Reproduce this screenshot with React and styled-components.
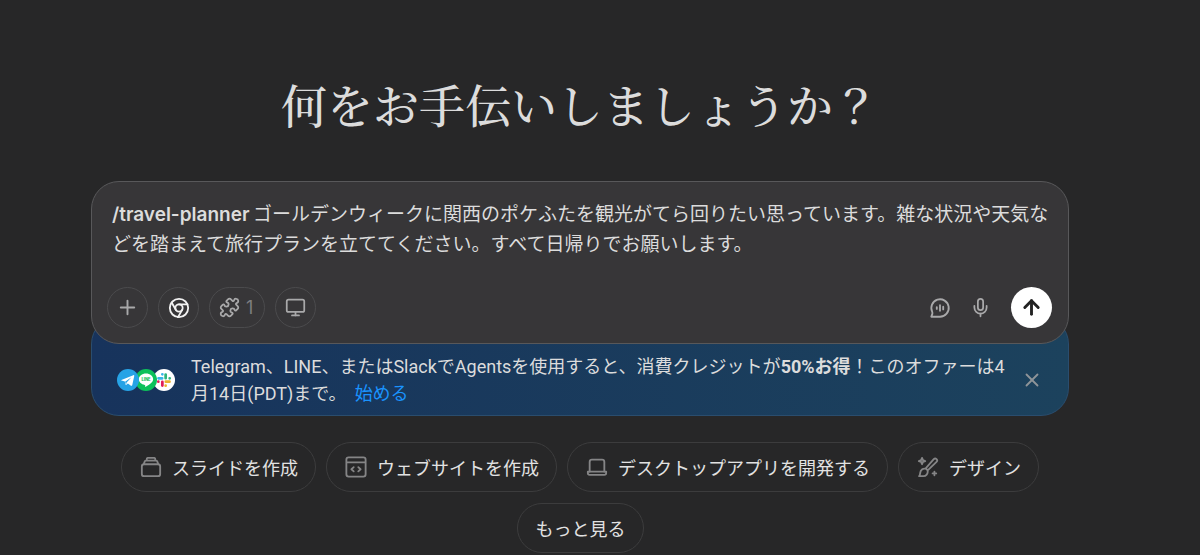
import React, { useState } from 'react';
import styled, { createGlobalStyle } from 'styled-components';
import { ArrowUp, Mic, Monitor, Plus, Puzzle, X } from 'lucide-react';

const GlobalStyle = createGlobalStyle`
  * {
    box-sizing: border-box;
  }
  body {
    margin: 0;
    background-color: #272728;
    color: #dcdcdc;
    font-family: Inter, "Noto Sans CJK JP", sans-serif;
  }
  button, textarea {
    font-family: inherit;
  }
`

const Page = styled.main`
  display: flex;
  flex-direction: column;
  align-items: center;
  padding: 73px 40px 0 0;
`

const Heading = styled.h1`
  margin: 0 0 48px;
  font-family: "Noto Serif CJK JP", "Noto Serif JP", "Noto Sans CJK JP", serif;
  font-size: 46px;
  font-weight: 500;
  line-height: 60px;
`

const Panel = styled.div`
  width: 100%;
  max-width: 978px;
`

const Composer = styled.form`
  position: relative;
  z-index: 1;
  padding: 18px 16px 15px 15px;
  border: 1px solid #58585a;
  border-radius: 28px;
  background-color: #373638;
`

const Prompt = styled.div`
  display: grid;
  margin: 0 0 27px;
  padding: 0 0 0 5px;
  font-size: 19px;
  line-height: 30px;
`

const Command = styled.label`
  grid-area: 1 / 1;
  justify-self: start;
  align-self: start;
  font-weight: 600;
`

const PromptInput = styled.textarea`
  grid-area: 1 / 1;
  width: 100%;
  margin: 0;
  padding: 0;
  border: none;
  outline: none;
  resize: none;
  overflow: hidden;
  background: transparent;
  color: inherit;
  font-size: inherit;
  line-height: inherit;
  text-indent: 141px;
`

const Toolbar = styled.div`
  display: flex;
  align-items: center;
  gap: 10px;
`

const Spacer = styled.div`
  flex: 1;
`

const ToolButton = styled.button`
  display: flex;
  align-items: center;
  justify-content: center;
  gap: 6px;
  min-width: 41px;
  height: 41px;
  padding: 0 ${({ $wide }) => ($wide ? "11px 0 9px" : "0")};
  border: 1px solid #4b4b4d;
  border-radius: 21px;
  background: transparent;
  color: ${({ $active }) => ($active ? "#f2f2f2" : "#a9a9aa")};
  font-size: 18px;
`

const Count = styled.span`
  color: #7d7d7f;
`

const GhostButton = styled.button`
  display: flex;
  align-items: center;
  justify-content: center;
  width: ${({ $size }) => $size}px;
  height: ${({ $size }) => $size}px;
  padding: 0;
  border: none;
  background: transparent;
  color: #a9a9aa;
`

const SendButton = styled(GhostButton)`
  margin-left: 5px;
  border-radius: 50%;
  background-color: #fff;
  color: #222;
`

const CloseButton = styled(GhostButton)`
  color: #8f9499;
`

const Banner = styled.section`
  display: flex;
  align-items: center;
  margin-top: -28px;
  padding: 36px 24px 8px 25px;
  border: 1px solid #2a4d6e;
  border-radius: 28px;
  background: linear-gradient(90deg, #17335c, #1c425d);
`

const Logos = styled.div`
  display: flex;
  flex-shrink: 0;
  margin-right: 16px;
`

const Logo = styled.svg`
  position: relative;
  z-index: ${({ $level }) => $level};
  width: 22px;
  height: 22px;
  margin-right: -4px;
  &:last-child {
    margin-right: 0;
  }
`

const BannerText = styled.p`
  flex: 1;
  margin: 0 14px 0 0;
  font-family: Roboto, "Noto Sans CJK JP", sans-serif;
  font-size: 18px;
  line-height: 27px;
`

const StartLink = styled.a`
  margin-left: 8px;
  color: #1a93fe;
  text-decoration: none;
`

const Chips = styled.div`
  display: flex;
  flex-wrap: wrap;
  justify-content: center;
  gap: 11px 10px;
  margin-top: 26px;
`

const Chip = styled.button`
  display: flex;
  align-items: center;
  gap: 10px;
  height: 50px;
  padding: 0 17px 1px 18px;
  border: 1px solid #3c3c3d;
  border-radius: 25px;
  background: transparent;
  color: #e2e2e2;
  font-size: 18px;
`

const ChipIcon = styled.svg`
  width: 22px;
  height: 22px;
  fill: none;
  stroke: #858586;
  stroke-width: 2;
  stroke-linecap: round;
  stroke-linejoin: round;
`

const LineIcon = styled(ChipIcon)`
  stroke: currentColor;
`

const chips = [
  {
    label: "スライドを作成",
    icon: (
      <>
        <rect x="2" y="9" width="20" height="13" rx="2.5" />
        <path d="M4 9l1.2-3.2A1.5 1.5 0 0 1 6.6 5h10.8a1.5 1.5 0 0 1 1.4.8L20 9M7 5l.6-2.2A1 1 0 0 1 8.6 2h6.8a1 1 0 0 1 1 .8L17 5" />
      </>
    ),
  },
  {
    label: "ウェブサイトを作成",
    icon: (
      <>
        <rect x="1.5" y="1.5" width="21" height="21" rx="2.5" />
        <path d="M2 7h20M9.5 12.2L7 14.5l2.5 2.3M14.5 12.2l2.5 2.3-2.5 2.3" />
      </>
    ),
  },
  {
    label: "デスクトップアプリを開発する",
    icon: (
      <>
        <path d="M4 17V6.5A2.5 2.5 0 0 1 6.5 4h11A2.5 2.5 0 0 1 20 6.5V17" />
        <path d="M2 17h20v1.5a2 2 0 0 1-2 2H4a2 2 0 0 1-2-2z" />
      </>
    ),
  },
  {
    label: "デザイン",
    icon: (
      <>
        <path d="M9.5 13.5l8.8-10a2.1 2.1 0 0 1 3 3l-9.6 9.2zM9.3 13.8a4 4 0 0 1 2.3 2.3c.6 3.2-1.8 5.9-4.6 5.9H2.3c1-.9 1-2.1 1.2-3.7.3-2.9 2.8-5 5.8-4.5z" />
        <path d="M5.5 2l1 2.5L9 5.5l-2.5 1-1 2.5-1-2.5L2 5.5l2.5-1zM19 17v4M17 19h4" />
      </>
    ),
  },
  { label: "もっと見る" },
]

const PROMPT_TEXT = "ゴールデンウィークに関西のポケふたを観光がてら回りたい思っています。雑な状況や天気などを踏まえて旅行プランを立ててください。すべて日帰りでお願いします。"

const AppLogos = () => (
  <Logos>
    <Logo $level={3} viewBox="0 0 24 24" aria-hidden="true">
      <circle cx="12" cy="12" r="12" fill="#27a3e6" />
      <path d="M4.8 12l13-5.3c.7-.3 1.2.1 1 .9l-2.2 10c-.2.8-.8 1-1.4.6l-3.3-2.5-1.7 1.6c-.4.4-.8.3-.9-.3l-.7-3.3-3.6-1.1c-.6-.1-.7-.4-.2-.6z" fill="#fff" />
      <path d="M8.8 13.8l7-4.8-5.3 5.7-.6 2.3z" fill="#27a3e6" />
    </Logo>
    <Logo $level={2} viewBox="0 0 24 24" aria-hidden="true">
      <circle cx="12" cy="12" r="12" fill="#0cc15a" />
      <path d="M12 5c-4.4 0-7.8 2.8-7.8 6.3 0 3.1 2.7 5.5 6.4 6.1.8.1.5.9.4 1.7 0 .4.2.5.6.3 2.5-1.3 8.2-4.3 8.2-8.1C19.8 7.8 16.4 5 12 5z" fill="#fff" />
      <text x="12" y="13" fontSize="4.5" fontWeight="800" textAnchor="middle" fill="#0cc15a">LINE</text>
    </Logo>
    <Logo $level={1} viewBox="0 0 24 24" aria-hidden="true">
      <circle cx="12" cy="12" r="12" fill="#fff" />
      <g fill="none" strokeWidth="3" strokeLinecap="round">
        <path d="M6 10.2h4M10.2 5.8v0" stroke="#36b6e8" />
        <path d="M13.8 6v4M18.2 10.2v0" stroke="#2eb67d" />
        <path d="M14 13.8h4M13.8 18.2v0" stroke="#ecb22e" />
        <path d="M10.2 14v4M5.8 13.8v0" stroke="#e01e5a" />
      </g>
    </Logo>
  </Logos>
)

const App = () => {
  const [text, setText] = useState(PROMPT_TEXT)
  const [showBanner, setShowBanner] = useState(true)

  return (
    <>
      <GlobalStyle />
      <Page>
        <Heading>何をお手伝いしましょうか？</Heading>
        <Panel>
          <Composer onSubmit={(e) => e.preventDefault()}>
            <Prompt>
              <Command htmlFor="prompt">/travel-planner</Command>
              <PromptInput id="prompt" rows={2} spellCheck={false} value={text} onChange={(e) => setText(e.target.value)} />
            </Prompt>
            <Toolbar>
              <ToolButton type="button" aria-label="追加">
                <Plus size={23} strokeWidth={2} />
              </ToolButton>
              <ToolButton type="button" $active aria-label="ブラウザ">
                <LineIcon viewBox="0 0 24 24">
                  <circle cx="12" cy="12" r="10" />
                  <circle cx="12" cy="12" r="4" />
                  <path d="M21.17 8H12M3.95 6.06L8.54 14M10.88 21.94L15.46 14" />
                </LineIcon>
              </ToolButton>
              <ToolButton type="button" $wide aria-label="スキル 1">
                <Puzzle size={21} strokeWidth={2} />
                <Count>1</Count>
              </ToolButton>
              <ToolButton type="button" aria-label="デスクトップ">
                <Monitor size={21} strokeWidth={2} />
              </ToolButton>
              <Spacer />
              <GhostButton type="button" $size={31} aria-label="音声会話">
                <LineIcon viewBox="0 0 24 24">
                  <path d="M2.5 21.5h9.5A9.5 9.5 0 1 0 3.5 16.2c.5 1 .3 1.8 0 2.8z" />
                  <path d="M8.5 11v2M12 9v6M15.5 10.5v3" />
                </LineIcon>
              </GhostButton>
              <GhostButton type="button" $size={31} aria-label="音声入力">
                <Mic size={21} strokeWidth={2} />
              </GhostButton>
              <SendButton type="submit" $size={41} aria-label="送信">
                <ArrowUp size={23} strokeWidth={3} />
              </SendButton>
            </Toolbar>
          </Composer>
          {showBanner && (
            <Banner>
              <AppLogos />
              <BannerText>
                Telegram、LINE、またはSlackでAgentsを使用すると、消費クレジットが<b>50%お得</b>！このオファーは4月14日(PDT)まで。
                <StartLink href="#start">始める</StartLink>
              </BannerText>
              <CloseButton type="button" $size={24} aria-label="閉じる" onClick={() => setShowBanner(false)}>
                <X size={22} strokeWidth={2} />
              </CloseButton>
            </Banner>
          )}
          <Chips>
            {chips.map(({ label, icon }) => (
              <Chip key={label} type="button">
                {icon && <ChipIcon viewBox="0 0 24 24">{icon}</ChipIcon>}
                {label}
              </Chip>
            ))}
          </Chips>
        </Panel>
      </Page>
    </>
  )
}

export default App
